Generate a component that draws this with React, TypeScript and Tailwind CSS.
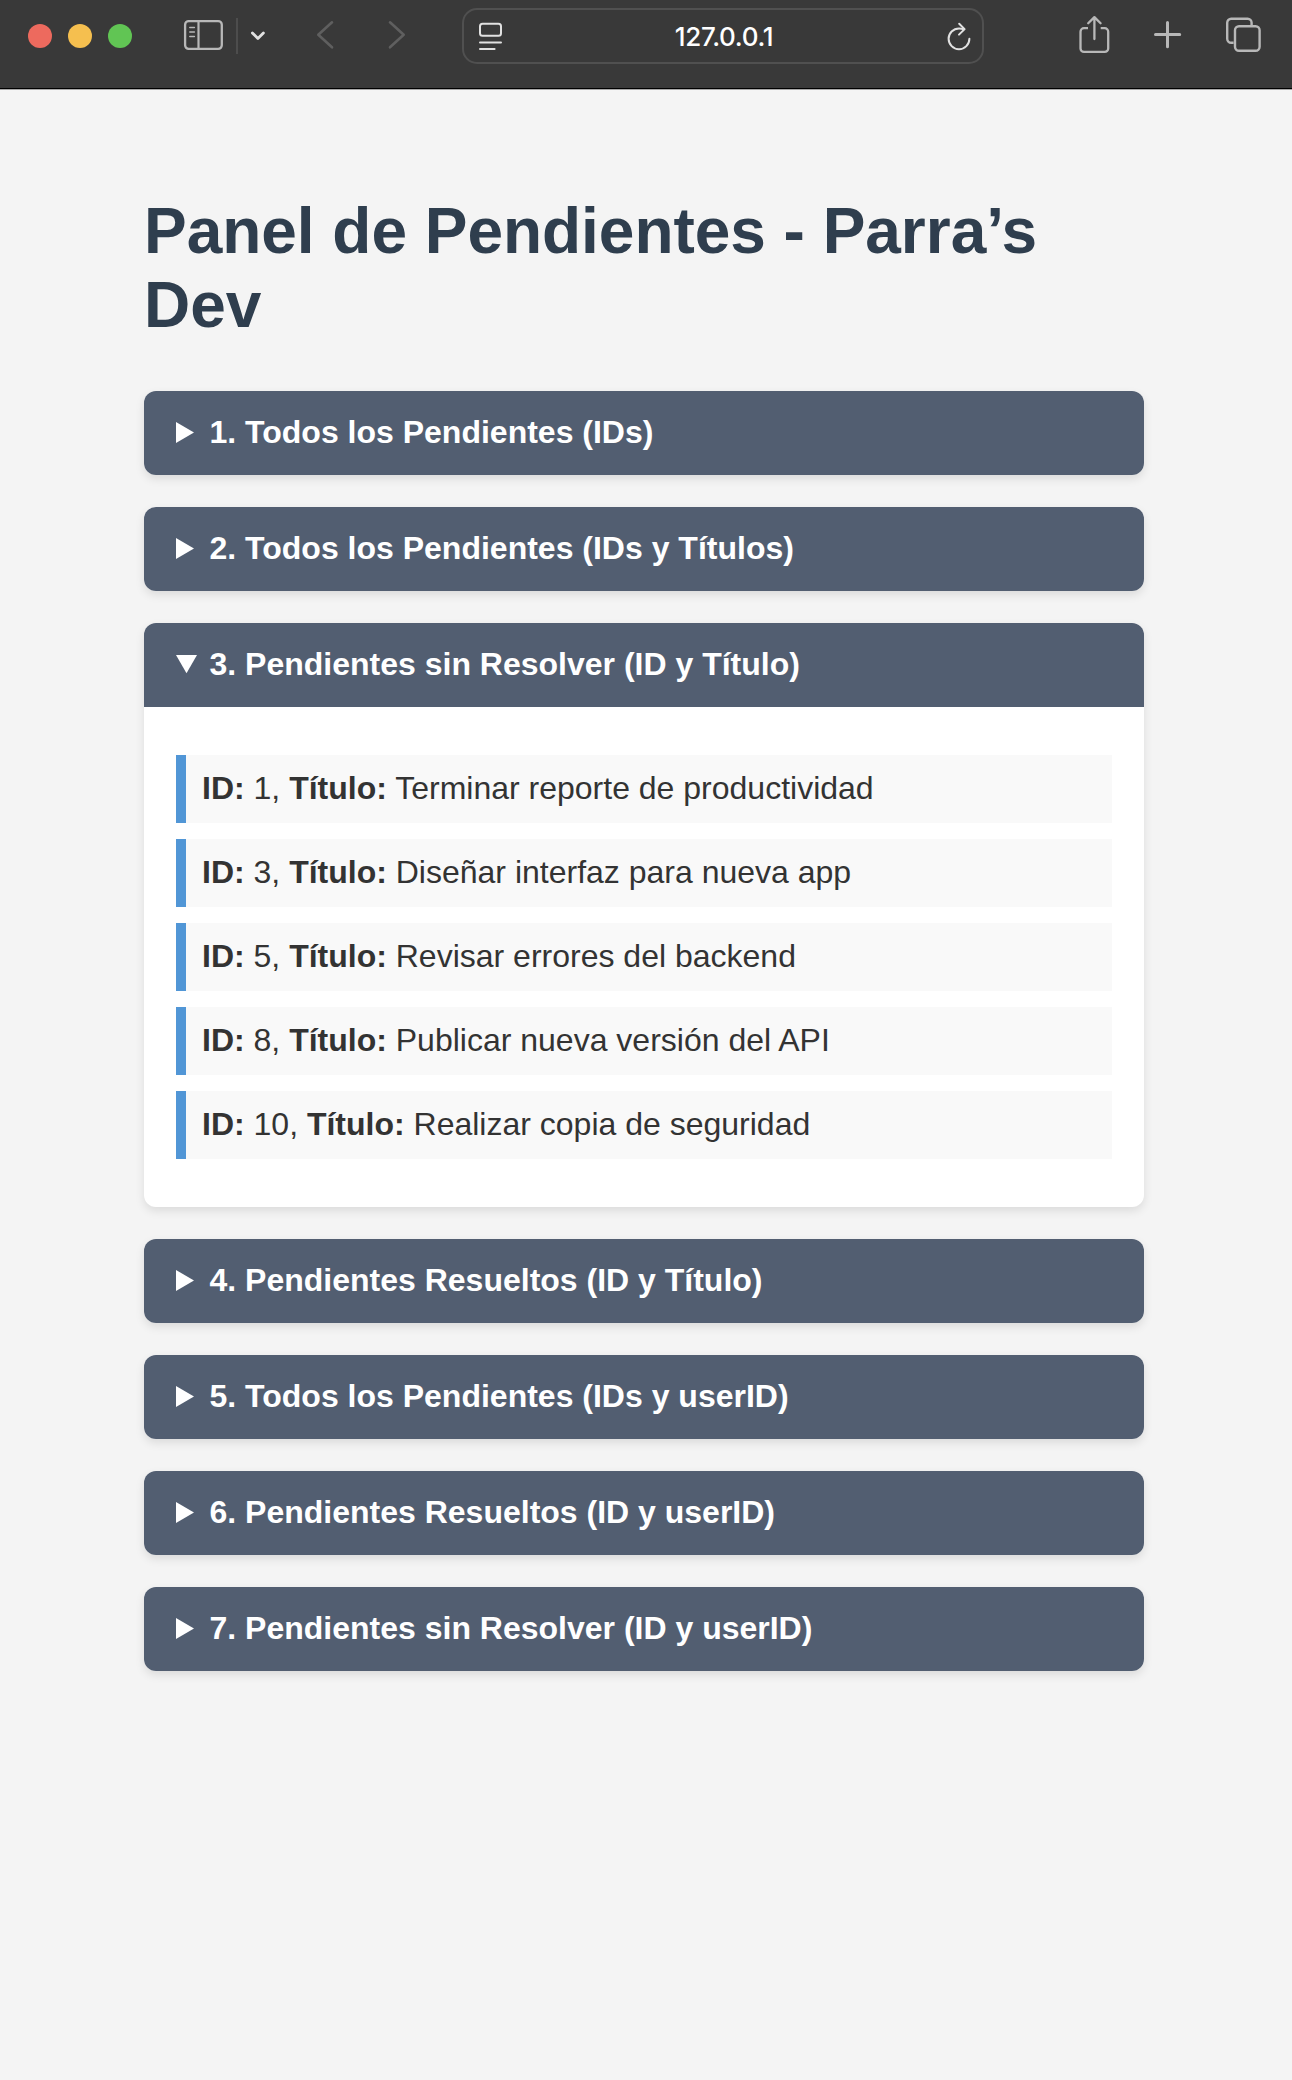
type Task = { id: number; title: string };
type Section = { label: string; open?: boolean; tasks?: Task[] };

const sections: Section[] = [
  { label: "1. Todos los Pendientes (IDs)" },
  { label: "2. Todos los Pendientes (IDs y Títulos)" },
  {
    label: "3. Pendientes sin Resolver (ID y Título)",
    open: true,
    tasks: [
      { id: 1, title: "Terminar reporte de productividad" },
      { id: 3, title: "Diseñar interfaz para nueva app" },
      { id: 5, title: "Revisar errores del backend" },
      { id: 8, title: "Publicar nueva versión del API" },
      { id: 10, title: "Realizar copia de seguridad" },
    ],
  },
  { label: "4. Pendientes Resueltos (ID y Título)" },
  { label: "5. Todos los Pendientes (IDs y userID)" },
  { label: "6. Pendientes Resueltos (ID y userID)" },
  { label: "7. Pendientes sin Resolver (ID y userID)" },
];

function Toolbar() {
  return (
    <header className="flex h-[90px] items-start border-b border-[#a8a8a8] bg-[#393939]">
      <div className="flex h-[89px] w-full items-start border-b border-black">
        <div className="mt-6 ml-7 flex gap-4">
          <span className="size-6 rounded-full bg-[#ed6a5e]" />
          <span className="size-6 rounded-full bg-[#f5bf4f]" />
          <span className="size-6 rounded-full bg-[#61c554]" />
        </div>
        <svg className="mt-[19px] ml-[51px] shrink-0" width="41" height="32" viewBox="0 0 41 32" fill="none" stroke="#b8b8b8" strokeLinecap="round">
          <rect x="2.1" y="2.1" width="36.7" height="27.8" rx="3.6" strokeWidth="2.3" />
          <path d="M15.5 2.5v27" strokeWidth="2.2" strokeLinecap="butt" />
          <path d="M6.8 8.6h4.6M6.8 13h4.6M6.8 17.4h4.6" strokeWidth="1.5" />
        </svg>
        <span className="mt-[18px] ml-[12px] h-9 w-0.5 bg-[#4d4d4d]" />
        <svg className="mt-[29px] ml-[12px] shrink-0" width="16" height="14" viewBox="0 0 16 14" fill="none" stroke="#e1e1e1" strokeWidth="2.8" strokeLinecap="round" strokeLinejoin="round">
          <path d="M2.4 3.9 7.9 9.4l5.5-5.5" />
        </svg>
        <svg className="mt-[20px] ml-[49px] shrink-0" width="20" height="30" viewBox="0 0 20 30" fill="none" stroke="#5f5f5f" strokeWidth="2.6" strokeLinecap="round" strokeLinejoin="round">
          <path d="M17 2.3 3.3 14.8 17 27.3" />
        </svg>
        <svg className="mt-[20px] ml-[52px] shrink-0" width="20" height="30" viewBox="0 0 20 30" fill="none" stroke="#5f5f5f" strokeWidth="2.6" strokeLinecap="round" strokeLinejoin="round">
          <path d="M3 2.3 16.7 14.8 3 27.3" />
        </svg>
        <div className="mt-2 ml-[55px] flex h-14 w-[522px] shrink-0 items-start rounded-[15px] border-2 border-[#505050]">
          <svg className="mt-[11px] ml-[13px] shrink-0" width="26" height="31" viewBox="0 0 26 31" fill="none" stroke="#e1e1e1" strokeWidth="2" strokeLinecap="round">
            <rect x="3" y="2.8" width="21" height="12" rx="2.5" />
            <path d="M3 21.4h21M3 28h14.6" />
          </svg>
          <span className="mt-[10px] flex-1 pr-[1px] text-center font-[Inter] text-[26px] leading-[34px] font-medium tracking-[-0.3px] text-white">127.0.0.1</span>
          <svg className="mt-[11px] mr-[10px] shrink-0" width="26" height="31" viewBox="0 0 26 31" fill="none" stroke="#e1e1e1" strokeWidth="2" strokeLinecap="round" strokeLinejoin="round">
            <path d="M23.4 17.8A10.4 10.4 0 1 1 13 7.4c1.7 0 3.2.2 4.8.8" />
            <path d="m13.2 2.8 5.4 5.3-5.6 5.5" />
          </svg>
        </div>
        <svg className="mt-[14px] ml-[93px] shrink-0" width="34" height="40" viewBox="0 0 34 40" fill="none" stroke="#b8b8b8" strokeWidth="2.3" strokeLinecap="round" strokeLinejoin="round">
          <path d="M11 14.2H7a3.5 3.5 0 0 0-3.5 3.5v16.7A3.5 3.5 0 0 0 7 37.9h20.7a3.5 3.5 0 0 0 3.5-3.5V17.7a3.5 3.5 0 0 0-3.5-3.5h-4" strokeLinecap="butt" />
          <path d="M17.4 25V3.4M11.2 9.3l6.2-6.2 6.2 6.2" />
        </svg>
        <svg className="mt-[20px] ml-[42px] shrink-0" width="30" height="30" viewBox="0 0 30 30" fill="none" stroke="#b8b8b8" strokeWidth="3" strokeLinecap="round">
          <path d="M14.5 2.4v24.4M2.5 14.5h24.2" />
        </svg>
        <svg className="mt-[16px] ml-[41px] shrink-0" width="38" height="38" viewBox="0 0 38 38" fill="none" stroke="#b8b8b8" strokeWidth="2.4" strokeLinejoin="round">
          <path d="M9.6 26.7H7.2a4 4 0 0 1-4-4V6.8a4 4 0 0 1 4-4h16.4a4 4 0 0 1 4 4v2.6" />
          <rect x="11" y="10.2" width="24.6" height="24.6" rx="4" />
        </svg>
      </div>
    </header>
  );
}

function Panel({ section }: { section: Section }) {
  return (
    <section className="overflow-hidden rounded-xl bg-white shadow-[0_4px_10px_rgba(0,0,0,0.1)]">
      <div className="flex h-21 items-center bg-[#525e71] pl-8 text-[32px] leading-9 font-bold text-white">
        <svg className="mr-[11.5px] shrink-0" width="22" height="22" viewBox="0 0 22 22" fill="#fff">
          {section.open ? <path d="M0 1h21L10.5 19.3z" /> : <path d="M0 0v21l18-10.5z" />}
        </svg>
        <span className="-mt-[3px]">{section.label}</span>
      </div>
      {section.tasks && (
        <ul className="flex flex-col gap-4 px-8 py-12 text-[32px] leading-9 text-[#333]">
          {section.tasks.map((t) => (
            <li key={t.id} className="h-17 border-l-[10px] border-[#5196d6] bg-[#f9f9f9] px-4 pt-[15px]">
              <strong>ID:</strong> {t.id}, <strong>Título:</strong> {t.title}
            </li>
          ))}
        </ul>
      )}
    </section>
  );
}

export default function App() {
  return (
    <div className="min-h-[2080px] bg-[#f4f4f4] font-['Liberation_Sans',Arial,sans-serif]">
      <Toolbar />
      <main className="pt-[104px] pr-[148px] pl-36">
        <h1 className="mb-[49px] text-[64px] leading-[74px] font-bold tracking-[-0.03px] text-[#2f3e4e]">Panel de Pendientes - Parra’s Dev</h1>
        <div className="flex flex-col gap-8">
          {sections.map((s) => (
            <Panel key={s.label} section={s} />
          ))}
        </div>
      </main>
    </div>
  );
}
